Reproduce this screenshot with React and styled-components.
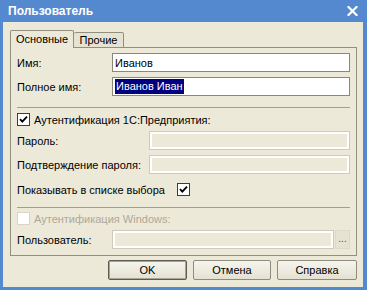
import React from "react";
import styled, { createGlobalStyle } from "styled-components";

const GlobalStyle = createGlobalStyle`
  html, body { margin: 0; padding: 0; background: #ffffff; }
  body { font-family: "Liberation Sans", Arial, sans-serif; font-size: 11px; color: #000; }
  * { box-sizing: border-box; }
`;

const Window = styled.div`
  width: 367px;
  height: 290px;
  background: #5589cf;
  padding: 0 4px 3px 3px;
  display: flex;
  flex-direction: column;
`;

const TitleBar = styled.div`
  height: 22px;
  flex: none;
  display: flex;
  align-items: center;
  justify-content: space-between;
  padding: 0 5px 0 5px;
  color: #ffffff;
  font-weight: bold;
  font-size: 12px;
`;

const Client = styled.div`
  flex: 1;
  background: #ece9d8;
  padding: 8px 6px 7px 7px;
  display: flex;
  flex-direction: column;
`;

const TabRow = styled.div`
  display: flex;
  align-items: flex-end;
  height: 18px;
  margin-bottom: -1px;
  position: relative;
  z-index: 1;
`;

const Tab = styled.div`
  height: ${(p) => (p.$active ? "18px" : "16px")};
  width: ${(p) => p.$w}px;
  border: 1px solid #928e80;
  border-bottom: ${(p) => (p.$active ? "none" : "1px solid #928e80")};
  border-left: ${(p) => (p.$first ? "1px solid #928e80" : "none")};
  border-radius: 2px 2px 0 0;
  background: ${(p) => (p.$active ? "#ece9d8" : "#e6e3d3")};
  display: flex;
  align-items: center;
  justify-content: center;
  padding-bottom: ${(p) => (p.$active ? "1px" : "0")};
`;

const Panel = styled.div`
  height: 209px;
  border: 1px solid #928e80;
  padding: 5px 6px 0 6px;
  display: flex;
  flex-direction: column;
`;

const Row = styled.div`
  display: flex;
  align-items: center;
  height: ${(p) => p.$h || 19}px;
  margin-top: ${(p) => p.$mt || 0}px;
  flex: none;
`;

const Label = styled.div`
  width: ${(p) => p.$w}px;
  flex: none;
  color: ${(p) => (p.$disabled ? "#aca899" : "#000")};
  white-space: nowrap;
`;

const Input = styled.div`
  flex: 1;
  height: 19px;
  border: 1px solid ${(p) => (p.$disabled ? "#cfcbbb" : "#8b877a")};
  background: ${(p) => (p.$disabled ? "#ece9d8" : "#ffffff")};
  box-shadow: ${(p) => (p.$disabled ? "inset 0 0 0 2px #ffffff" : "none")};
  display: flex;
  align-items: center;
  padding-left: 2px;
  white-space: nowrap;
  overflow: hidden;
`;

const Selected = styled.span`
  background: #000080;
  color: #ffffff;
  line-height: 15px;
  padding: 0 1px;
`;

const DotsButton = styled.div`
  width: 15px;
  height: 19px;
  flex: none;
  margin-left: 1px;
  border: 1px solid #dedacb;
  background: #e6e3d3;
  color: #555;
  display: flex;
  align-items: center;
  justify-content: center;
  font-size: 10px;
  letter-spacing: 0;
  padding-bottom: 3px;
`;

const Separator = styled.div`
  height: 1px;
  background: #a29e90;
  margin-top: ${(p) => p.$mt}px;
  flex: none;
`;

const Box = styled.span`
  width: 13px;
  height: 13px;
  flex: none;
  border: 1px solid ${(p) => (p.$disabled ? "#d8d4c6" : "#3c3c3c")};
  background: #ffffff;
  display: inline-flex;
  align-items: center;
  justify-content: center;
  margin-right: ${(p) => p.$mr || 0}px;
`;

const Buttons = styled.div`
  display: flex;
  justify-content: flex-end;
  gap: 6px;
  margin-top: 4px;
`;

const Button = styled.div`
  width: ${(p) => p.$w}px;
  height: 20px;
  border: 1px solid ${(p) => (p.$default ? "#5f5b4f" : "#8f8b7d")};
  box-shadow: ${(p) => (p.$default ? "inset 0 0 0 1px #a8a494" : "none")};
  border-radius: 2px;
  background: linear-gradient(#f6f5ee, #e4e1d2);
  display: flex;
  align-items: center;
  justify-content: center;
  font-size: 11px;
`;

const Check = () => (
  <svg width="9" height="9" viewBox="0 0 9 9">
    <path d="M1 4.2 L3.3 6.6 L8 1.6" fill="none" stroke="#000" strokeWidth="1.8" />
  </svg>
);

const CloseIcon = () => (
  <svg width="11" height="10" viewBox="0 0 11 10">
    <path d="M1.5 1 L9.5 9 M9.5 1 L1.5 9" stroke="#fff" strokeWidth="2.2" strokeLinecap="square" />
  </svg>
);

export default function App() {
  return (
    <>
      <GlobalStyle />
      <Window>
        <TitleBar>
          <span>Пользователь</span>
          <CloseIcon />
        </TitleBar>
        <Client>
          <TabRow>
            <Tab $active $first $w={64}>Основные</Tab>
            <Tab $w={50}>Прочие</Tab>
          </TabRow>
          <Panel>
            <Row>
              <Label $w={95}>Имя:</Label>
              <Input>Иванов</Input>
            </Row>
            <Row $mt={5}>
              <Label $w={95}>Полное имя:</Label>
              <Input><Selected>Иванов Иван</Selected></Input>
            </Row>
            <Separator $mt={11} />
            <Row $h={13} $mt={5}>
              <Box $mr={4}><Check /></Box>
              <span>Аутентификация 1С:Предприятия:</span>
            </Row>
            <Row $mt={5}>
              <Label $w={132}>Пароль:</Label>
              <Input $disabled />
            </Row>
            <Row $mt={5}>
              <Label $w={132}>Подтверждение пароля:</Label>
              <Input $disabled />
            </Row>
            <Row $h={13} $mt={9}>
              <Label $w={160}>Показывать в списке выбора</Label>
              <Box><Check /></Box>
            </Row>
            <Separator $mt={11} />
            <Row $h={13} $mt={4}>
              <Box $disabled $mr={4} />
              <Label $disabled>Аутентификация Windows:</Label>
            </Row>
            <Row $mt={5}>
              <Label $w={95}>Пользователь:</Label>
              <Input $disabled />
              <DotsButton>...</DotsButton>
            </Row>
          </Panel>
          <Buttons>
            <Button $default $w={79}>OK</Button>
            <Button $w={78}>Отмена</Button>
            <Button $w={80}>Справка</Button>
          </Buttons>
        </Client>
      </Window>
    </>
  );
}
